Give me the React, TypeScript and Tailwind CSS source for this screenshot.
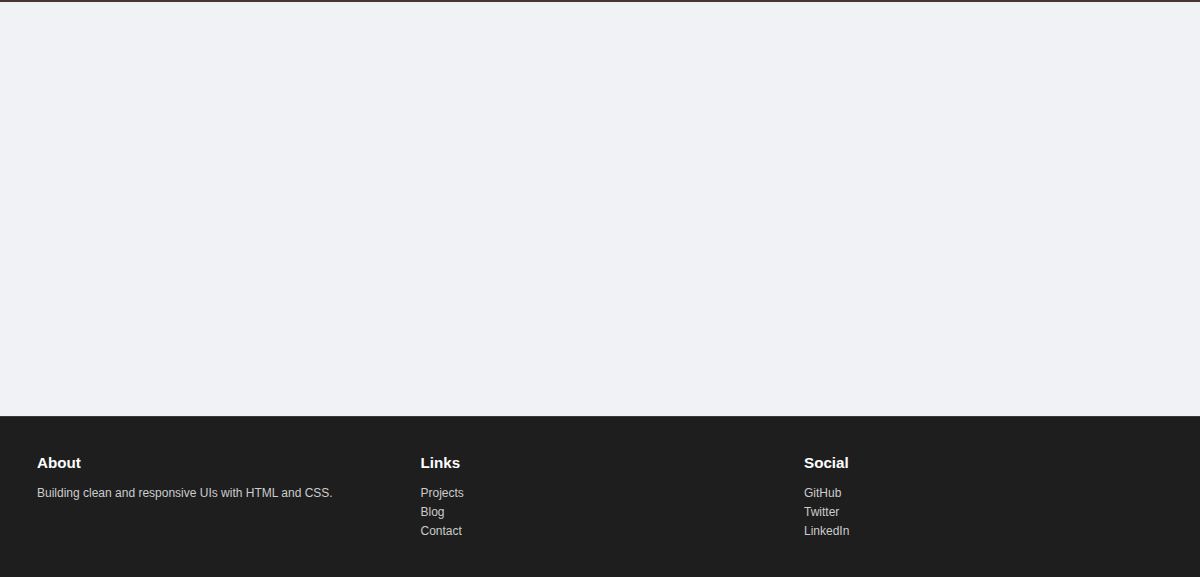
export default function App() {
  return (
    <div className="min-h-[577px] flex flex-col bg-[#f0f2f5]" style={{ fontFamily: '"Liberation Sans", Arial, sans-serif' }}>
      <div className="h-[2px] bg-[#4a3631]" />
      <main className="h-[414px]" />
      <footer className="flex-1 bg-[#1e1e1e] border-t border-[#3a3a3a] text-[#cccccc] px-[37px] pt-[36px] pb-[36px]">
        <div className="grid grid-cols-3 gap-[24.5px]">
          <div>
            <h3 className="text-[15.2px] font-bold text-white leading-[20px] mb-[11px]">About</h3>
            <p className="text-[12px] leading-[19.2px]">Building clean and responsive UIs with HTML and CSS.</p>
          </div>
          <div>
            <h3 className="text-[15.2px] font-bold text-white leading-[20px] mb-[11px]">Links</h3>
            <ul className="text-[12px] leading-[19.2px]">
              <li>Projects</li>
              <li>Blog</li>
              <li>Contact</li>
            </ul>
          </div>
          <div>
            <h3 className="text-[15.2px] font-bold text-white leading-[20px] mb-[11px]">Social</h3>
            <ul className="text-[12px] leading-[19.2px]">
              <li>GitHub</li>
              <li>Twitter</li>
              <li>LinkedIn</li>
            </ul>
          </div>
        </div>
      </footer>
    </div>
  );
}
